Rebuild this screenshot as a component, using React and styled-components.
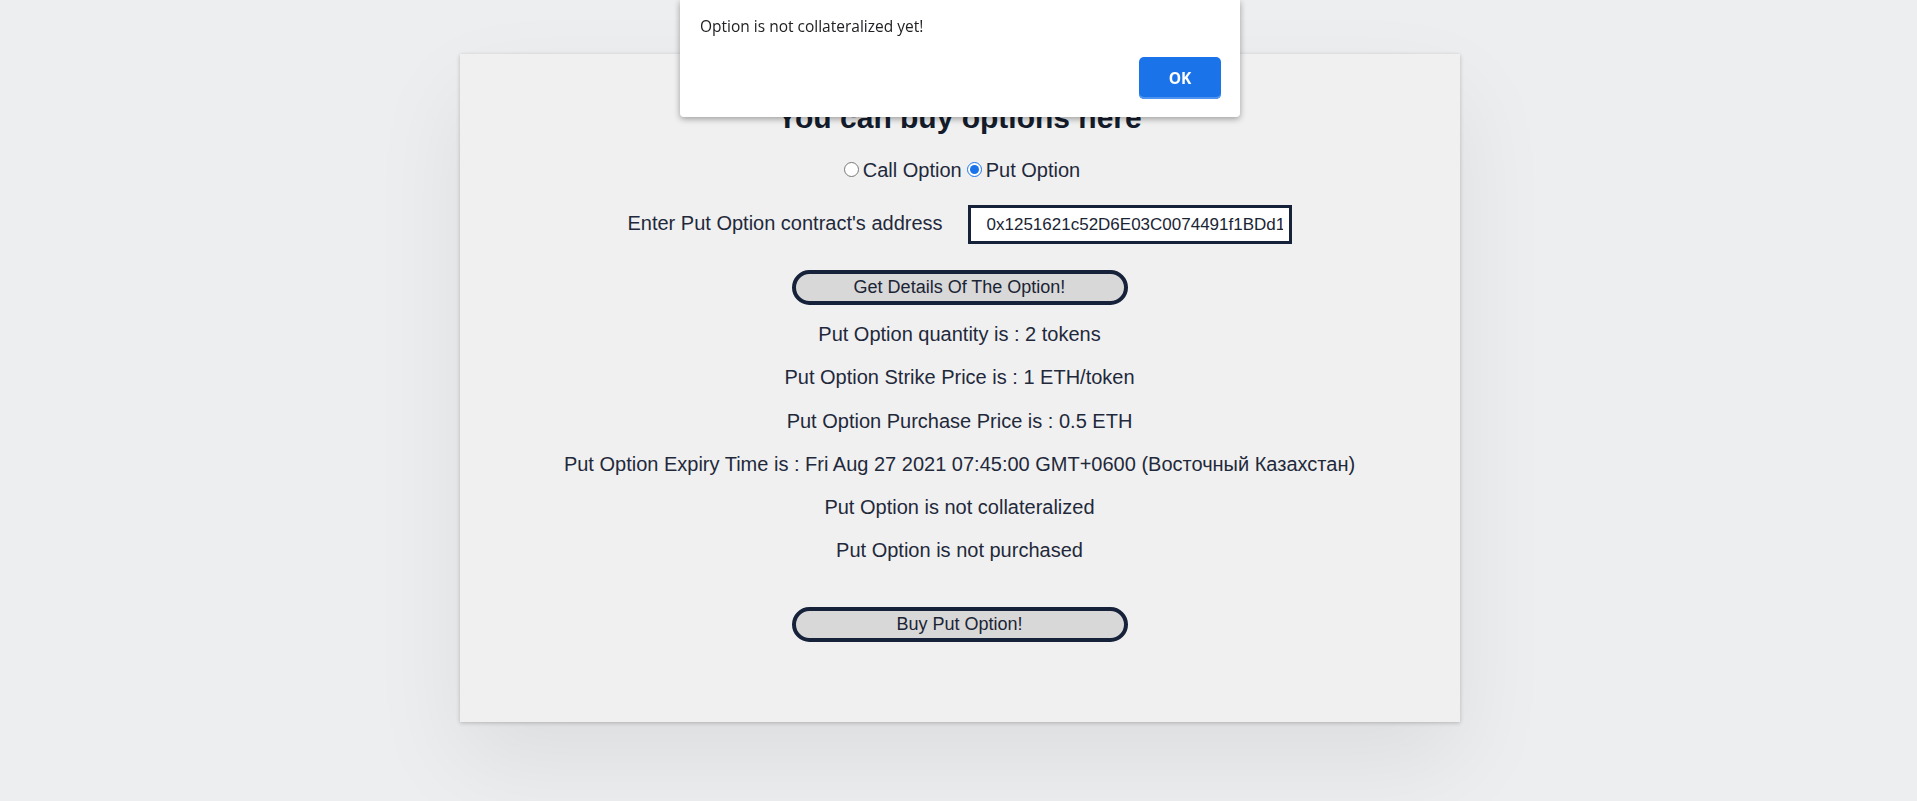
import { useState } from "react";
import styled, { createGlobalStyle } from "styled-components";

const GlobalStyle = createGlobalStyle`
    html, body {
        margin: 0;
        padding: 0;
        height: 100%;
        overflow: hidden;
        background: #edeef0;
    }
    #root {
        min-height: 100%;
    }
`;

const details = [
    "Put Option quantity is : 2 tokens",
    "Put Option Strike Price is : 1 ETH/token",
    "Put Option Purchase Price is : 0.5 ETH",
    "Put Option Expiry Time is : Fri Aug 27 2021 07:45:00 GMT+0600 (Восточный Казахстан)",
    "Put Option is not collateralized",
    "Put Option is not purchased",
];

const App = () => {
    const [kind, setKind] = useState("put");

    return (
        <Page>
            <GlobalStyle />
            <Card>
                <Title>You can buy options here</Title>
                <RadioRow>
                    <RadioLabel>
                        <Radio type="radio" name="kind" checked={kind === "call"} onChange={() => setKind("call")} />
                        Call Option
                    </RadioLabel>
                    <RadioLabel>
                        <Radio type="radio" name="kind" checked={kind === "put"} onChange={() => setKind("put")} />
                        Put Option
                    </RadioLabel>
                </RadioRow>
                <AddressRow>
                    <span>Enter Put Option contract's address</span>
                    <AddressInput readOnly defaultValue="0x1251621c52D6E03C0074491f1BDd1a7c3B09e2F4" />
                </AddressRow>
                <PillButton>Get Details Of The Option!</PillButton>
                <InfoList>
                    {details.map((line, index) => (
                        <InfoLine key={index}>{line}</InfoLine>
                    ))}
                </InfoList>
                <PillButton $top={45}>Buy Put Option!</PillButton>
            </Card>

            <Alert role="alertdialog">
                <AlertMessage>Option is not collateralized yet!</AlertMessage>
                <AlertActions>
                    <OkButton>OK</OkButton>
                </AlertActions>
            </Alert>
        </Page>
    );
};

const Page = styled.div`
    min-height: 801px;
    padding-top: 54px;
    box-sizing: border-box;
    font-family: "Liberation Sans", Arial, sans-serif;
    color: #1f293b;
`;

const Card = styled.main`
    width: 1000px;
    height: 668px;
    margin: 0 auto;
    position: relative;
    left: 1px;
    box-sizing: border-box;
    padding-top: 47px;
    background: #f0f0f0;
    display: flex;
    flex-direction: column;
    align-items: center;
    box-shadow: 0 1px 4px rgba(0, 0, 0, 0.22), 0 40px 90px rgba(0, 0, 0, 0.07);
`;

const Title = styled.h1`
    margin: 0;
    font-size: 30px;
    line-height: 33px;
    font-weight: 700;
    color: #141c2c;
`;

const RadioRow = styled.div`
    margin-top: 25px;
    display: flex;
    font-size: 20px;
    line-height: 23px;
`;

const RadioLabel = styled.label`
    display: flex;
    align-items: center;
`;

const Radio = styled.input`
    width: 15px;
    height: 15px;
    margin: 0 4px 3px 5px;
    accent-color: #1a73e8;
`;

const AddressRow = styled.div`
    margin-top: 23px;
    display: flex;
    align-items: center;
    gap: 25px;
    font-size: 20px;
    line-height: 23px;
    span {
        margin-top: -3px;
    }
`;

const AddressInput = styled.input`
    width: 324px;
    height: 39px;
    box-sizing: border-box;
    border: 3px solid #16223a;
    background: #ffffff;
    padding: 0 6px 0 16px;
    font-family: "Liberation Sans", Arial, sans-serif;
    font-size: 17px;
    color: #1b2434;
    outline: none;
`;

const PillButton = styled.button`
    margin-top: ${(p) => p.$top ?? 26}px;
    width: 336px;
    height: 35px;
    box-sizing: border-box;
    border: 4px solid #16223a;
    border-radius: 20px;
    background: #d8d8d8;
    font-family: "Liberation Sans", Arial, sans-serif;
    font-size: 18px;
    color: #1b2434;
    padding: 0;
    cursor: pointer;
`;

const InfoList = styled.div`
    margin-top: 18px;
    display: flex;
    flex-direction: column;
    align-items: center;
    gap: 20.3px;
`;

const InfoLine = styled.p`
    margin: 0;
    font-size: 20px;
    line-height: 23px;
`;

const Alert = styled.div`
    position: fixed;
    left: 680px;
    top: 0;
    width: 560px;
    box-sizing: border-box;
    padding: 16px 19px 18px 20px;
    background: #ffffff;
    border-radius: 0 0 4px 4px;
    box-shadow: 0 2px 6px rgba(0, 0, 0, 0.35);
    font-family: "Open Sans", "Noto Sans", sans-serif;
    color: #202124;
`;

const AlertMessage = styled.div`
    font-size: 15.5px;
    line-height: 20px;
`;

const AlertActions = styled.div`
    margin-top: 21px;
    display: flex;
    justify-content: flex-end;
`;

const OkButton = styled.button`
    width: 82px;
    height: 42px;
    border: none;
    border-radius: 5px;
    background: #1a73e8;
    box-shadow: inset 0 -2px 0 #4f93f0;
    color: #ffffff;
    font-family: "Open Sans", "Noto Sans", sans-serif;
    font-weight: 700;
    font-size: 15.5px;
    cursor: pointer;
`;

export default App;
